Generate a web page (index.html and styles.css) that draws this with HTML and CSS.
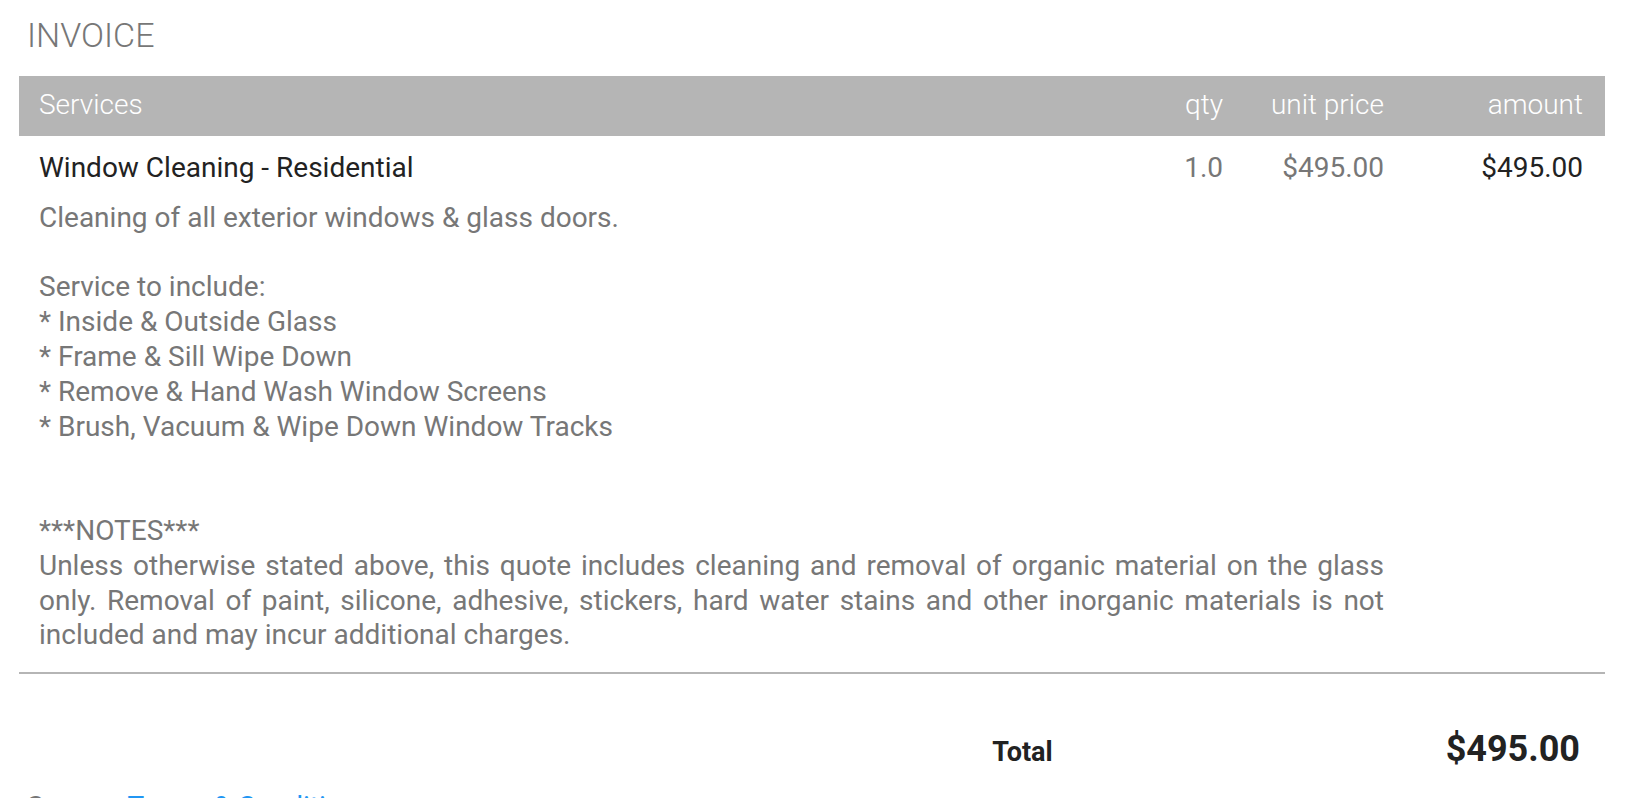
FILE: index.html
```html
<!DOCTYPE html>
<html lang="en">
<head>
<meta charset="utf-8">
<title>Invoice</title>
<link rel="stylesheet" href="styles.css">
</head>
<body>
<div class="page">
  <h1 class="title">INVOICE</h1>
  <div class="grid head">
    <div class="c-name">Services</div>
    <div class="c-num">qty</div>
    <div class="c-num">unit price</div>
    <div class="c-num">amount</div>
  </div>
  <div class="grid item">
    <div class="c-name item-name">Window Cleaning - Residential</div>
    <div class="c-num muted">1.0</div>
    <div class="c-num muted">$495.00</div>
    <div class="c-num dark">$495.00</div>
    <div class="desc">Cleaning of all exterior windows &amp; glass doors.

Service to include:
* Inside &amp; Outside Glass
* Frame &amp; Sill Wipe Down
* Remove &amp; Hand Wash Window Screens
* Brush, Vacuum &amp; Wipe Down Window Tracks


***NOTES***
Unless otherwise stated above, this quote includes cleaning and removal of organic material on the glass only. Removal of paint, silicone, adhesive, stickers, hard water stains and other inorganic materials is not included and may incur additional charges.</div>
  </div>
  <div class="rule"></div>
  <div class="totals">
    <div class="total-label">Total</div>
    <div class="total-value">$495.00</div>
  </div>
  <p class="footer">See our <a href="#" class="link">Terms &amp; Conditions</a></p>
</div>
</body>
</html>
```
FILE: styles.css
```css
html, body {
  margin: 0;
  padding: 0;
  background: #fff;
}
body {
  font-family: Roboto, "Liberation Sans", Arial, sans-serif;
  font-size: 28px;
  line-height: 34.8px;
  color: #222;
}
.page {
  padding: 0 23px 0 19px;
}
.title {
  margin: 19px 0 24px 0;
  padding-left: 8px;
  font-size: 34px;
  line-height: 33px;
  font-weight: 300;
  color: #777;
}
.grid {
  display: grid;
  grid-template-columns: 1fr 80px 161px 199px;
  padding: 0 22px 0 20px;
}
.head {
  box-sizing: border-box;
  height: 60px;
  padding-top: 12px;
  align-items: start;
  background: #b5b5b5;
  color: #fff;
  font-weight: 300;
}
.c-num {
  text-align: right;
}
.item {
  padding-top: 15px;
}
.item-name {
  color: #222;
}
.muted {
  color: #777;
}
.dark {
  color: #222;
}
.desc {
  grid-column: 1 / span 3;
  margin-top: 15px;
  color: #777;
  white-space: pre-line;
  text-align: justify;
}
.rule {
  margin-top: 19px;
  border-top: 2px solid #b5b5b5;
}
.totals {
  display: flex;
  justify-content: flex-end;
  align-items: baseline;
  gap: 393px;
  margin-top: 54px;
  padding-right: 25px;
  line-height: 42px;
  font-weight: 700;
  color: #222;
}
.total-label {
  font-size: 27px;
}
.total-value {
  font-size: 36px;
}
.footer {
  margin: 17px 0 0 0;
  padding-left: 8px;
  color: #777;
}
.link {
  color: #2196f3;
  text-decoration: none;
}
```
